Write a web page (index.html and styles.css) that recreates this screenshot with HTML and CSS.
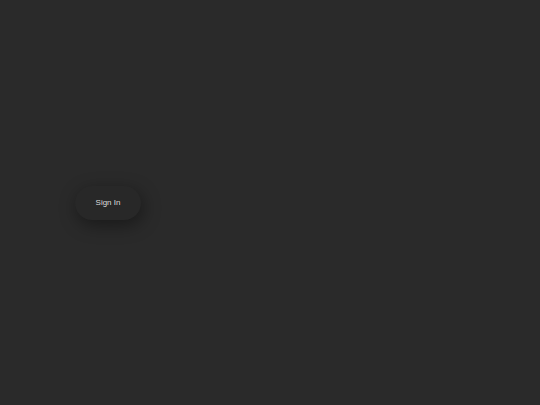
FILE: index.html
```html
<!DOCTYPE html>
<html>
<head>
<meta charset="utf-8">
<link rel="stylesheet" href="styles.css">
</head>
<body>
<main class="stage">
  <button class="signin">Sign In</button>
</main>
</body>
</html>
```
FILE: styles.css
```css
html, body {
  margin: 0;
  height: 100%;
  background: #2a2a2a;
}
.stage {
  height: 100%;
  display: flex;
  align-items: center;
  padding-left: 75px;
}
.signin {
  width: 66px;
  height: 34px;
  border: none;
  border-radius: 17px;
  background: #282828;
  color: #dcdcdc;
  font-family: "Liberation Sans", Arial, sans-serif;
  font-size: 8px;
  padding: 0;
  box-shadow: 2px 5px 18px rgba(0,0,0,0.4);
}
```
